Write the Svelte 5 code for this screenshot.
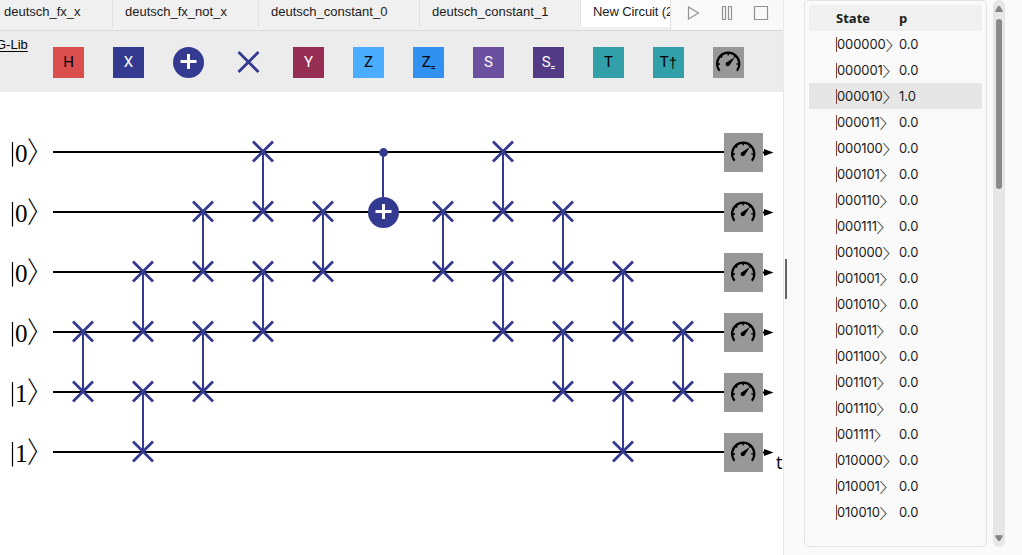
<script>
  const tabs = [
    { label: 'deutsch_fx_x', width: 113 },
    { label: 'deutsch_fx_not_x', width: 146 },
    { label: 'deutsch_constant_0', width: 161 },
    { label: 'deutsch_constant_1', width: 161 },
    { label: 'New Circuit (2)', width: 120, active: true }
  ];
  const palette = [
    { label: 'H', bg: '#da4f4d', fg: '#000' },
    { label: 'X', bg: '#343a8f', fg: '#fff' },
    { kind: 'not' },
    { kind: 'swap' },
    { label: 'Y', bg: '#962d52', fg: '#fff' },
    { label: 'Z', bg: '#4aadff', fg: '#000' },
    { label: 'Z', sub: true, bg: '#3191f0', fg: '#000' },
    { label: 'S', bg: '#6a509f', fg: '#fff' },
    { label: 'S', sub: true, bg: '#523b84', fg: '#fff' },
    { label: 'T', bg: '#31a0a8', fg: '#000' },
    { label: 'T', dagger: true, bg: '#31a0a8', fg: '#000' },
    { kind: 'measure' }
  ];
  const qubits = [0, 0, 0, 0, 1, 1];
  // [column, upper wire, lower wire]
  const swaps = [
    [0, 3, 4], [1, 2, 3], [1, 4, 5], [2, 1, 2], [2, 3, 4], [3, 0, 1], [3, 2, 3],
    [4, 1, 2], [6, 1, 2], [7, 0, 1], [7, 2, 3], [8, 1, 2], [8, 3, 4], [9, 2, 3],
    [9, 4, 5], [10, 3, 4]
  ];
  const colX = (c) => 83 + 60 * c;
  const wireY = (w) => 60 + 60 * w;
  const states = Array.from({ length: 19 }, (_, i) => ({
    bits: i.toString(2).padStart(6, '0'),
    p: i === 2 ? '1.0' : '0.0'
  }));
</script>

{#snippet cross()}
  <path d="M-10 -10.5L10 9.5M10 -10.5L-10 9.5" stroke="#343a8f" stroke-width="2.8" fill="none" />
{/snippet}

{#snippet plus()}
  <circle r="15.5" fill="#343a8f" />
  <path d="M-8 -1H8M0 -8.5V6.5" stroke="#fff" stroke-width="3" fill="none" />
{/snippet}

{#snippet gauge()}
  <path d="M-9 8.2A11.1 11.1 0 1 1 8.4 8.2" fill="none" stroke="#000" stroke-width="2.2" />
  <path d="M-.3 -10V-7M-7.9 -6.7L-6.2 -5M7.3 -6.7L5.6 -5M-11 1.5H-8.5M10.4 1.5H7.9" stroke="#000" stroke-width="1.4" />
  <path d="M5.5 -4L1.4 2.2A2.2 2.2 0 1 1 -1.4 -.6L4.9 -4.6Z" fill="#000" />
{/snippet}

<div class="app">
  <main>
    <header>
      <div class="tabs">
        {#each tabs as tab}
          <div class="tab" class:active={tab.active} style:width="{tab.width}px">{tab.label}</div>
        {/each}
      </div>
      <div class="controls">
        <svg width="112" height="30" viewBox="0 0 112 30" fill="none" stroke="#929292" stroke-width="1.2">
          <path d="M17.5 7L27.5 13L17.5 19Z" />
          <path d="M51.5 6.5h3v13h-3zM57.5 6.5h3v13h-3zM83.5 6.5h13v13h-13z" />
        </svg>
      </div>
    </header>
    <div class="palette">
      <div class="lib"><span>G-Lib</span></div>
      <div class="gates">
        {#each palette as gate}
          {#if gate.kind}
            <div class="gate" class:measure={gate.kind === 'measure'}>
              <svg width="31" height="31" viewBox="-15.5 -15.5 31 31">
                {#if gate.kind === 'not'}{@render plus()}
                {:else if gate.kind === 'swap'}{@render cross()}
                {:else}{@render gauge()}{/if}
              </svg>
            </div>
          {:else}
            <div class="gate" style:background={gate.bg} style:color={gate.fg}>
              {gate.label}{#if gate.sub}<sub>=</sub>{/if}{#if gate.dagger}<span class="dagger">†</span>{/if}
            </div>
          {/if}
        {/each}
      </div>
    </div>
    <svg class="circuit" width="783" height="463" viewBox="0 0 783 463">
      {#each qubits as q, w}
        <g transform="translate(0 {wireY(w)})">
          <path d="M12.5 -10V14.5" stroke="#000" stroke-width="1.2" />
          <text class="digit" x="15" y="9.5">{q}</text>
          <text class="angle" x="27" y="11" transform="translate(27 0) scale(.88 1) translate(-27 0)">〉</text>
          <path d="M53 0H724" stroke="#000" stroke-width="2" />
        </g>
      {/each}
      {#each swaps as [c, a, b]}
        <path d="M{colX(c)} {wireY(a)}V{wireY(b)}" stroke="#343a8f" stroke-width="2" />
        <g transform="translate({colX(c)} {wireY(a)})">{@render cross()}</g>
        <g transform="translate({colX(c)} {wireY(b)})">{@render cross()}</g>
      {/each}
      <path d="M383 60V120" stroke="#343a8f" stroke-width="2" />
      <circle cx="383.5" cy="60.5" r="4.4" fill="#343a8f" />
      <g transform="translate(383.5 120.5)">{@render plus()}</g>
      {#each qubits as _, w}
        <g transform="translate(743.5 {wireY(w) + 0.5})">
          <rect x="-19.5" y="-19.5" width="39" height="39" fill="#989898" />
          {@render gauge()}
          <path d="M19.5 -1H20.5V-3.5L30 0L20.5 3.5V1H19.5Z" fill="#000" />
        </g>
      {/each}
      <text class="time" x="776" y="377">t</text>
    </svg>
    <div class="grip"></div>
  </main>

  <aside>
    <div class="card">
      <div class="row head"><span>State</span><span>p</span></div>
      {#each states as s}
        <div class="row" class:hit={s.p === '1.0'}>
          <span class="ket"><i></i>{s.bits}<b>〉</b></span><span>{s.p}</span>
        </div>
      {/each}
    </div>
    <div class="scrollbar">
      <svg width="12" height="12" viewBox="0 0 12 12"><path d="M2.5 9.5L5.2 4.5H6.8L9.5 9.5Z" fill="#858585" stroke="#858585" stroke-linejoin="round" /></svg>
      <div class="thumb"></div>
      <svg class="down" width="12" height="12" viewBox="0 0 12 12"><path d="M2.5 .8L5.2 5.5H6.8L9.5 .8Z" fill="#858585" stroke="#858585" stroke-linejoin="round" /></svg>
    </div>
  </aside>
</div>

<style>
  :global(body) { margin: 0; overflow: hidden; }
  .app { display: flex; width: 1022px; height: 555px; background: #fff; font-family: Inter, sans-serif; }
  main { position: relative; width: 783px; height: 555px; border-right: 1px solid #e9e9e9; flex: none; }
  header { display: flex; height: 30px; background: #f0f0f0; border-bottom: 1px solid #d9d9d9; }
  .tabs { display: flex; width: 670px; overflow: hidden; flex: none; }
  .tab { box-sizing: border-box; height: 27px; flex: none; padding: 0 0 0 4px; border-right: 1px solid #e2e2e2; font: 13px/24px "Liberation Sans", Arial, sans-serif; color: #1b1b1b; white-space: nowrap; }
  .tab + .tab { padding-left: 12px; }
  .tab.active { background: #fff; letter-spacing: -.1px; }
  .controls { width: 112px; height: 30px; background: #f9f9f9; border-left: 1px solid #e2e2e2; }
  svg { display: block; }
  .palette { display: flex; height: 61px; background: #ececec; }
  .lib { width: 53px; flex: none; font: 13px/15px "Liberation Sans", Arial, sans-serif; color: #000; padding-top: 6px; box-sizing: border-box; }
  .lib span { margin-left: -4px; text-decoration: underline; text-underline-offset: 2px; }
  .gates { display: flex; gap: 29px; padding-top: 16px; }
  .gate { width: 31px; height: 31px; display: flex; align-items: center; justify-content: center; font: 15px/33px Roboto, sans-serif; }
  .gate sub { font-size: 8px; line-height: 8px; vertical-align: baseline; padding-top: 10px; font-weight: 900; }
  .dagger { font: 15px/33px "Liberation Sans", Arial, sans-serif; }
  .measure { background: #989898; }
  .digit { font: 25px "Liberation Serif", serif; }
  .angle { font: 300 29px "Noto Sans CJK JP", sans-serif; }
  .time { font: 18px "Open Sans", sans-serif; }
  .grip { position: absolute; left: 785px; top: 259px; width: 2px; height: 40px; background: #666; }
  aside { display: flex; flex: 1; background: #fafafa; padding-left: 20px; }
  .card { box-sizing: border-box; width: 183px; height: 547px; border: 1px solid #e3e3e3; border-radius: 5px; padding: 4px; }
  .row { box-sizing: border-box; display: grid; grid-template-columns: 63px 1fr; height: 26px; padding-left: 27px; font-size: 13px; line-height: 26px; color: #1b1b1b; border-radius: 1px; }
  .head { background: #f0f0f0; font-weight: 700; font-family: "Open Sans", sans-serif; }
  .hit { background: #e6e6e6; }
  .ket { display: flex; align-items: center; letter-spacing: -.1px; white-space: nowrap; margin-left: -.5px; }
  .ket i { width: 1px; height: 15px; background: #8a3f38; margin-right: .5px; flex: none; }
  .ket b { font: 300 14px/26px "Noto Sans CJK JP", sans-serif; width: 7px; color: #333; transform: scaleX(1.35); transform-origin: 0 50%; margin-left: -.5px; }
  .scrollbar { display: flex; flex-direction: column; width: 12px; height: 547px; margin-left: 6px; background: #e6e6e6; border-radius: 6px; align-items: center; }
  .scrollbar svg { margin-top: 2px; }
  .thumb { width: 6px; height: 170px; margin-top: 5px; background: #8a8a8a; border-radius: 3px; }
  .scrollbar .down { margin-top: auto; }
</style>
